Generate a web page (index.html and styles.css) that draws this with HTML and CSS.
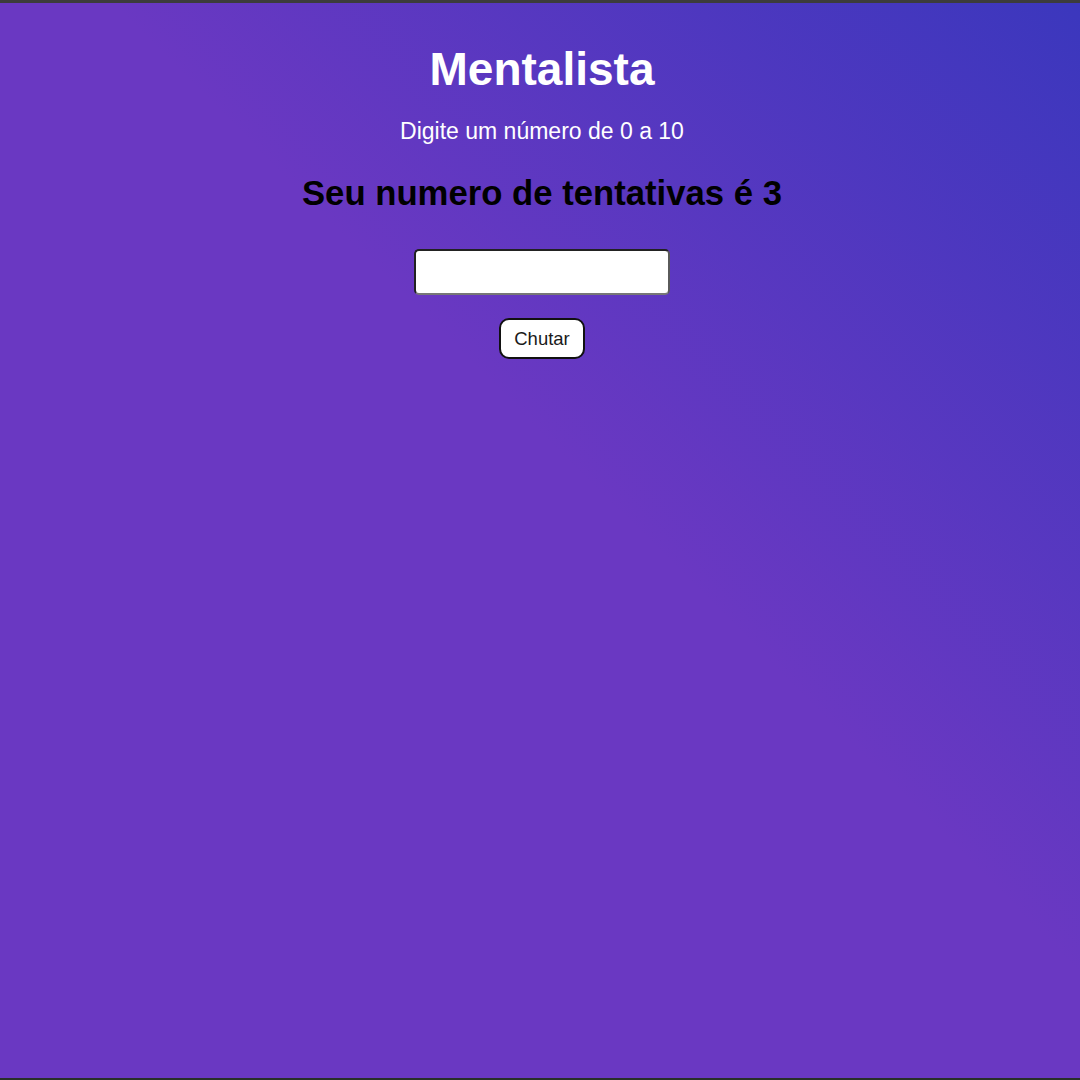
FILE: index.html
```html
<!DOCTYPE html>
<html lang="pt-BR">
<head>
<meta charset="utf-8">
<title>Mentalista</title>
<link rel="stylesheet" href="styles.css">
</head>
<body>
  <main class="game">
    <h1 class="title">Mentalista</h1>
    <p class="subtitle">Digite um número de 0 a 10</p>
    <h2 class="attempts">Seu numero de tentativas é 3</h2>
    <input class="guess" type="text" aria-label="Seu chute">
    <button class="kick" type="button">Chutar</button>
  </main>
</body>
</html>
```
FILE: styles.css
```css
html, body {
  margin: 0;
  padding: 0;
}
body {
  box-sizing: border-box;
  height: 100vh;
  border-top: 3px solid #3c3c3c;
  border-bottom: 2px solid #283028;
  background: linear-gradient(to top right, #6a38c2 55%, #3b37bd 100%);
  font-family: "Liberation Sans", Arial, sans-serif;
}
.game {
  display: flex;
  flex-direction: column;
  align-items: center;
  padding-top: 43px;
  padding-left: 4px;
}
.title {
  margin: 0;
  font-size: 46px;
  line-height: 1;
  font-weight: bold;
  color: #ffffff;
}
.subtitle {
  margin: 28px 0 0;
  font-size: 23px;
  line-height: 1;
  color: #ffffff;
}
.attempts {
  margin: 33px 0 0;
  font-size: 34.7px;
  line-height: 1;
  font-weight: bold;
  color: #000000;
}
.guess {
  box-sizing: border-box;
  margin: 38px 0 0;
  width: 256px;
  height: 46px;
  border-width: 2px;
  border-style: solid;
  border-color: #222222 #5a5a5a #777777 #222222;
  border-radius: 5px;
  background: #ffffff;
  font-family: "Liberation Sans", Arial, sans-serif;
  font-size: 18px;
  padding: 0 8px;
}
.kick {
  margin: 23px 0 0;
  padding: 8px 13px;
  border: 2px solid #111111;
  border-radius: 10px;
  background: #ffffff;
  color: #1a1a1a;
  font-family: "Liberation Sans", Arial, sans-serif;
  font-size: 18.5px;
  line-height: 21px;
  cursor: pointer;
}
```
